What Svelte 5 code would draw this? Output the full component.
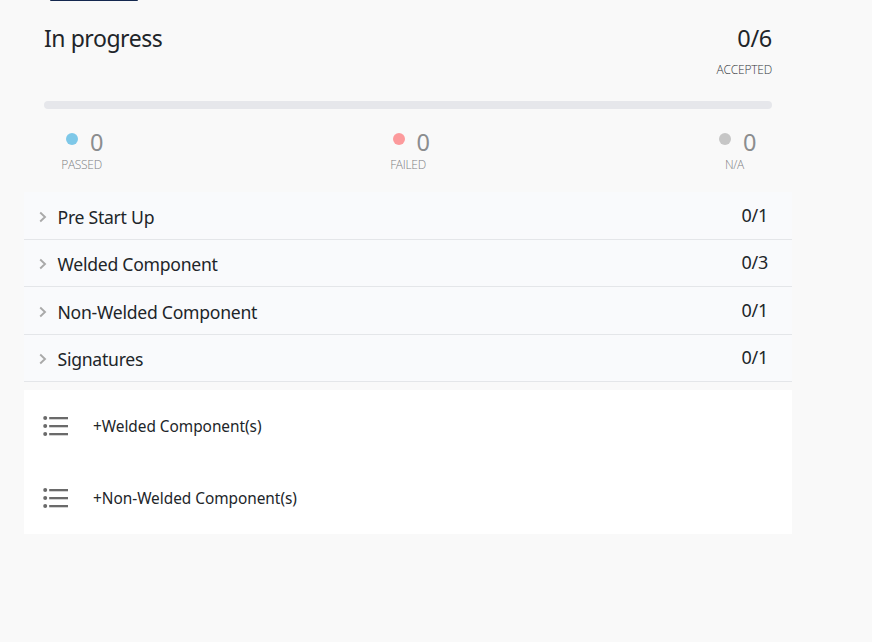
<script>
  const stats = [
    { label: 'PASSED', value: 0, kind: 'passed' },
    { label: 'FAILED', value: 0, kind: 'failed' },
    { label: 'N/A', value: 0, kind: 'na' }
  ];
  const sections = [
    { name: 'Pre Start Up', count: '0/1' },
    { name: 'Welded Component', count: '0/3' },
    { name: 'Non-Welded Component', count: '0/1' },
    { name: 'Signatures', count: '0/1' }
  ];
  const actions = ['+Welded Component(s)', '+Non-Welded Component(s)'];
</script>

<main>
  <div class="tab"></div>
  <header>
    <h1>In progress</h1>
    <div class="total">
      <span class="score">0/6</span>
      <span class="caption">ACCEPTED</span>
    </div>
  </header>
  <div class="track"></div>
  <div class="stats">
    {#each stats as s}
      <div class="stat {s.kind}">
        <div class="figure"><i></i><b>{s.value}</b></div>
        <span class="label">{s.label}</span>
      </div>
    {/each}
  </div>
  <ul>
    {#each sections as s}
      <li>
        <svg width="8" height="12" viewBox="0 0 8 12"><path d="M1.2 1.5 6 6 1.2 10.5" fill="none" stroke="#a9a9a9" stroke-width="1.9" /></svg>
        <span class="name">{s.name}</span>
        <span class="count">{s.count}</span>
      </li>
    {/each}
  </ul>
  <div class="panel">
    {#each actions as a}
      <div class="action">
        <svg width="26" height="22" viewBox="0 0 26 22" fill="#6a6a6a">
          {#each [3, 11, 19] as y}
            <circle cx="2.2" cy={y} r="2" />
            <rect x="6.2" y={y - 1} width="18.8" height="2.3" />
          {/each}
        </svg>
        <span>{a}</span>
      </div>
    {/each}
  </div>
</main>

<style>
  :global(body) { background: #f9f9f9; }
  main {
    width: 768px;
    height: 642px;
    margin-left: 24px;
    overflow: hidden;
    font-family: 'Noto Sans', 'Open Sans', sans-serif;
    color: #212529;
  }
  .tab {
    width: 88px;
    height: 1px;
    margin-left: 26px;
    background: #14284f;
    border-radius: 0 0 3px 3px;
  }
  header {
    height: 100px;
    padding: 0 20px;
    display: flex;
    justify-content: space-between;
  }
  h1 {
    margin: 20px 0 0;
    font-size: 23px;
    line-height: 34px;
    font-weight: 400;
    letter-spacing: -0.45px;
  }
  .total {
    display: flex;
    flex-direction: column;
    align-items: flex-end;
    padding-top: 20px;
  }
  .score { font-size: 23.5px; line-height: 34px; letter-spacing: -0.3px; }
  .caption {
    margin-top: 6px;
    font-family: 'Open Sans', sans-serif;
    font-weight: 300;
    font-size: 12px;
    line-height: 18px;
    letter-spacing: -0.2px;
    color: #33373b;
  }
  .track {
    height: 8px;
    margin: 0 20px;
    border-radius: 4px;
    background: #e6e7eb;
  }
  .stats {
    height: 83px;
    padding: 0 20px;
    display: flex;
    justify-content: space-between;
  }
  .stat {
    width: 75px;
    padding-top: 16px;
    display: flex;
    flex-direction: column;
    align-items: center;
  }
  .figure {
    width: 75px;
    height: 34px;
    display: flex;
    padding-left: 44px;
    box-sizing: border-box;
    align-items: flex-start;
  }
  i {
    width: 12px;
    height: 12px;
    margin: 8px 12px 0 -22px;
    border-radius: 50%;
    flex: none;
  }
  .passed i { background: #7ec8e8; }
  .failed i { background: #fc9a9c; }
  .na i { background: #c6c6c6; }
  b { font-size: 23.5px; line-height: 34px; font-weight: 400; letter-spacing: -0.3px; color: #8b8d8f; }
  .label {
    font-family: 'Open Sans', sans-serif;
    font-weight: 300;
    font-size: 12px;
    line-height: 18px;
    margin-top: -3px;
    letter-spacing: -0.3px;
    color: #7d8083;
  }
  ul { margin: 0; padding: 0; list-style: none; }
  li {
    height: 47.5px;
    box-sizing: border-box;
    padding: 0 24px 0 15px;
    display: flex;
    align-items: center;
    background: #f9fafc;
    border-bottom: 1px solid #e4e6e9;
  }
  li svg { margin-top: 3px; }
  .name {
    flex: 1;
    margin: 3px 0 0 10.5px;
    font-size: 17.6px;
    line-height: 26px;
    letter-spacing: -0.26px;
  }
  .count { margin-top: -1.5px; font-size: 18px; line-height: 26px; letter-spacing: -0.3px; }
  .panel { margin-top: 8px; background: #fff; }
  .action {
    height: 72px;
    padding-left: 19px;
    display: flex;
    align-items: center;
  }
  .action span { margin: 1px 0 0 24px; font-size: 15.4px; line-height: 22px; letter-spacing: -0.03px; }
</style>
